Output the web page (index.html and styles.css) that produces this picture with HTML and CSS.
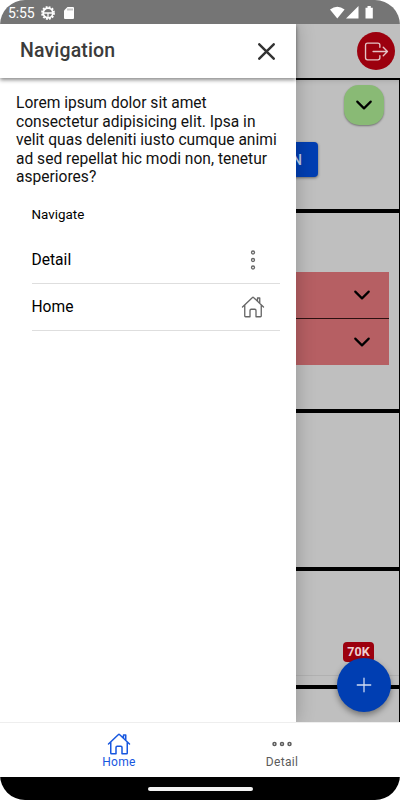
FILE: index.html
```
<!DOCTYPE html>
<html lang="en">
<head>
<meta charset="utf-8">
<title>Navigation</title>
<link rel="stylesheet" href="styles.css">
</head>
<body>
<div class="phone">
  <header class="status">
    <span class="clock">5:55</span>
    <svg class="gear" viewBox="0 0 14 14"><circle cx="7" cy="7" r="6" fill="none" stroke="#fff" stroke-width="1.8" stroke-dasharray="1.9 1.242"/><circle cx="7" cy="7" r="4.800" fill="none" stroke="#fff" stroke-width="1.7"/><path d="M2.500 7h9M7 7v4" stroke="#fff" stroke-width="1.3"/></svg>
    <svg class="sd" viewBox="0 0 10 12"><path d="M3.500 0H9q1 0 1 1v10q0 1-1 1H1q-1 0-1-1V3.500z" fill="#fff"/><path d="M4 1.500v2M6 1.500v2M8 1.500v2" stroke="#757575" stroke-width=".8"/></svg>
    <svg class="signals" viewBox="0 0 44 14"><path d="M0 3.500Q7.300-2.200 14.600 3.500L7.300 12.500z" fill="#fff"/><path d="M28.500 0v12.500H16z" fill="#fff"/><path d="M35.500 1.700h2V0h3.300v1.700h2v10.800h-7.300z" fill="#fff"/></svg>
  </header>
  <main class="stage">
    <div class="page">
      <div class="toolbar">
        <span class="exit"><svg viewBox="0 0 512 512"><path d="M320 176v-40a40 40 0 00-40-40H88a40 40 0 00-40 40v240a40 40 0 0040 40h192a40 40 0 0040-40v-40M384 176l80 80-80 80M191 256h273"/></svg></span>
      </div>
      <section class="block actions">
        <span class="toggle"><svg class="chev" viewBox="0 0 512 512"><path d="M112 184l144 144 144-144"/></svg></span>
        <span class="button">N</span>
      </section>
      <section class="block accordions">
        <div class="accordion"><svg class="chev" viewBox="0 0 512 512"><path d="M112 184l144 144 144-144"/></svg></div>
        <div class="accordion"><svg class="chev" viewBox="0 0 512 512"><path d="M112 184l144 144 144-144"/></svg></div>
      </section>
      <section class="block empty"></section>
      <section class="block counter"><span class="badge">70K</span><div class="rule"></div></section>
      <section class="block last"></section>
    </div>
    <div class="fab"><svg viewBox="0 0 512 512"><path d="M256 112v288M400 256H112"/></svg></div>
    <aside class="drawer">
      <div class="title"><span>Navigation</span><svg class="close" viewBox="0 0 16 16"><path d="M1.200 1.200l13.600 13.600M14.800 1.200L1.200 14.800"/></svg></div>
      <p class="intro">Lorem ipsum dolor sit amet<br>consectetur adipisicing elit. Ipsa in<br>velit quas deleniti iusto cumque animi<br>ad sed repellat hic modi non, tenetur<br>asperiores?</p>
      <nav class="list">
        <div class="list-head">Navigate</div>
        <div class="item"><span>Detail</span><svg viewBox="0 0 512 512"><circle cx="256" cy="256" r="32"/><circle cx="256" cy="416" r="32"/><circle cx="256" cy="96" r="32"/></svg></div>
        <div class="item"><span>Home</span><svg viewBox="0 0 512 512"><path d="M80 212v236a16 16 0 0016 16h96V328a24 24 0 0124-24h80a24 24 0 0124 24v136h96a16 16 0 0016-16V212M480 256L266.890 52c-5-5.280-16.690-5.340-21.780 0L32 256M400 179V64h-48v69"/></svg></div>
      </nav>
    </aside>
  </main>
  <nav class="tabs">
    <div class="tab active"><svg viewBox="0 0 512 512"><path d="M80 212v236a16 16 0 0016 16h96V328a24 24 0 0124-24h80a24 24 0 0124 24v136h96a16 16 0 0016-16V212M480 256L266.890 52c-5-5.280-16.690-5.340-21.780 0L32 256M400 179V64h-48v69"/></svg><span>Home</span></div>
    <div class="tab"><svg viewBox="0 0 512 512"><circle cx="256" cy="256" r="32"/><circle cx="416" cy="256" r="32"/><circle cx="96" cy="256" r="32"/></svg><span>Detail</span></div>
  </nav>
  <footer class="system"><span class="handle"></span></footer>
</div>
</body>
</html>
```

FILE: styles.css
```
* { box-sizing: border-box; }
body { margin: 0; background: #fff; font-family: Roboto, "Liberation Sans", sans-serif; }
svg { display: block; fill: none; stroke-linecap: round; stroke-linejoin: round; }
.phone { width: 400px; height: 800px; border-radius: 25px; overflow: hidden; display: flex; flex-direction: column; background: #fff; }
.status { height: 24px; flex: none; background: #757575; display: flex; align-items: center; padding: 1px 27px 0 8px; color: #fff; }
.status svg { stroke-linecap: butt; stroke-linejoin: miter; }
.clock { font-size: 14px; width: 33px; letter-spacing: -.1px; }
.gear { width: 14px; height: 14px; }
.sd { width: 10px; height: 12px; margin-left: 9px; }
.signals { width: 44px; height: 14px; margin-left: auto; margin-right: -1px; }
.stage { position: relative; height: 698px; flex: none; overflow: hidden; background: #bfbfbf; }
.page { display: flex; flex-direction: column; height: 698px; }
.toolbar { height: 54px; flex: none; padding: 8px 5px 0; display: flex; justify-content: flex-end; }
.exit { width: 38px; height: 38px; border-radius: 50%; background: #9c000e; display: flex; align-items: center; justify-content: center; }
.exit svg { width: 27px; height: 27px; stroke: #e4c3c6; stroke-width: 26; }
.block { flex: none; border: solid #000; border-width: 0 1px 4px 0; display: flex; flex-direction: column; align-items: flex-end; }
.actions { height: 135px; border-top-width: 2px; padding-top: 5px; box-shadow: inset 0 5px 4px -4px #8886; }
.toggle { width: 40px; height: 40px; border-radius: 15px; background: #89ba75; margin-right: 15px; display: flex; align-items: center; justify-content: center; box-shadow: 0 1px 2px #0006; }
.chev { width: 24px; height: 24px; stroke: #000; stroke-width: 46; }
.button { width: 62px; height: 35px; margin: 17px 81px 0 0; border-radius: 4px; background: #003eb2; color: #bfcdea; font-size: 14px; font-weight: 500; line-height: 36px; text-align: right; padding-right: 16px; box-shadow: 0 1px 3px #0007; }
.accordions { height: 200px; padding: 59px 10px 0 0; }
.accordion { width: 260px; height: 46px; background: #b65f63; display: flex; align-items: center; justify-content: flex-end; padding-right: 15px; }
.accordion + .accordion { height: 47px; border-top: 1px solid #2b1010; }
.empty { height: 158px; }
.counter { height: 118px; justify-content: space-between; padding: 71px 0 9px; }
.badge { width: 31px; height: 20px; border-radius: 4px; background: #9c000e; color: #eed0d2; font-size: 12.500px; font-weight: 700; line-height: 19px; text-align: center; margin-right: 25px; }
.rule { width: 100%; height: 1px; background: #b1b1b1; }
.last { flex: 1; border-bottom: 0; }
.fab { position: absolute; right: 9px; bottom: 10px; width: 54px; height: 54px; border-radius: 50%; background: #003eb2; box-shadow: 0 3px 6px #0006; display: flex; align-items: center; justify-content: center; }
.fab svg { width: 24px; height: 24px; stroke: #d2ddf2; stroke-width: 27; }
.drawer { position: absolute; left: 0; top: 0; width: 296px; height: 100%; background: #fff; box-shadow: 0 0 18px #0000003d; }
.title { height: 54px; display: flex; align-items: center; justify-content: space-between; padding: 0 21px 0 20px; color: #3b3b3b; font-size: 19.500px; letter-spacing: .15px; font-weight: 500; line-height: 22px; box-shadow: 0 2px 4px #0007; }
.close { width: 17px; height: 17px; stroke: #333; stroke-width: 2.300; }
.intro { margin: 16px 0 0 16px; font-size: 15.580px; line-height: 18.500px; color: #111; white-space: nowrap; }
.list { margin: 3px 16px 0 31.500px; }
.list-head { height: 47px; line-height: 50px; font-size: 13.400px; color: #000; }
.item { height: 47px; border-bottom: 1px solid #dedede; display: flex; align-items: center; justify-content: space-between; padding-right: 15px; font-size: 15.600px; color: #000; }
.item span { padding-top: 1px; }
.item svg { width: 24px; height: 24px; stroke: #666; stroke-width: 28; }
.tabs { height: 55px; flex: none; border-top: 1px solid #eee; display: flex; justify-content: center; background: #fff; }
.tab { width: 163px; display: flex; flex-direction: column; align-items: center; padding-top: 9px; color: #5b5b5b; font-size: 12px; letter-spacing: .3px; line-height: 12px; }
.tab span { padding-left: 1px; }
.tab svg { width: 24px; height: 24px; stroke: currentColor; stroke-width: 32; }
.tab.active { color: #1757df; }
.system { height: 23px; flex: none; background: #000; display: flex; align-items: center; justify-content: center; }
.handle { width: 105px; height: 4px; border-radius: 2px; background: #f3f3f3; }
```
